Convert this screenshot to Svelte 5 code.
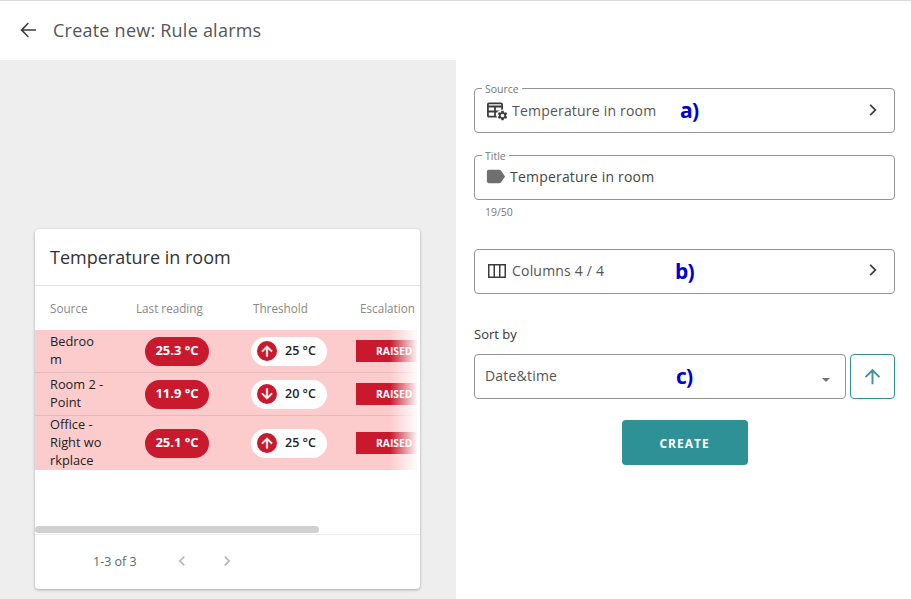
<script>
  const rows = [
    { source: 'Bedroo\nm', reading: '25.3 °C', dir: 'up', limit: '25 °C', size: 'mid' },
    { source: 'Room 2 -\nPoint', reading: '11.9 °C', dir: 'down', limit: '20 °C', size: 'mid' },
    { source: 'Office -\nRight wo\nrkplace', reading: '25.1 °C', dir: 'up', limit: '25 °C', size: 'tall' }
  ];
</script>

<div class="page">
  <header class="top">
    <svg class="back" viewBox="0 0 24 24" width="24" height="24"><path d="M20 11.200H7.500l5.400-5.600-1-1L4.400 12l7.500 7.400 1-1-5.400-5.600H20z" /></svg>
    <h1>Create new: Rule alarms</h1>
  </header>

  <main class="body">
    <section class="preview">
      <article class="card">
        <h2>Temperature in room</h2>
        <div class="table">
          <div class="row head">
            <span>Source</span>
            <span>Last reading</span>
            <span>Threshold</span>
            <span class="nowrap">Escalation</span>
          </div>
          {#each rows as r}
            <div class="row data {r.size}">
              <span class="src">{r.source}</span>
              <span class="reading"><span class="lift">{r.reading}</span></span>
              <span class="limit">
                <span class="dot">
                  <svg viewBox="0 0 24 24" width="16" height="16" class:flip={r.dir === 'down'}><path d="M4 12l1.41 1.41L11 7.83V20h2V7.83l5.58 5.59L20 12l-8-8-8 8z" /></svg>
                </span>
                <span class="lift">{r.limit}</span>
              </span>
              <span class="esc">RAISED</span>
            </div>
          {/each}
          <div class="fade"></div>
        </div>
        <div class="spacer"></div>
        <div class="scroll"><div class="thumb"></div></div>
        <footer class="pager">
          <span class="count">1-3 of 3</span>
          <svg viewBox="0 0 24 24" width="20" height="20"><path d="M15.41 16.59L10.83 12l4.58-4.59L14 6l-6 6 6 6z" /></svg>
          <svg viewBox="0 0 24 24" width="20" height="20"><path d="M8.59 16.59L13.17 12 8.59 7.41 10 6l6 6-6 6z" /></svg>
        </footer>
      </article>
    </section>

    <section class="form">
      <div class="field source">
        <span class="legend">Source</span>
        <svg class="ico" viewBox="0 0 24 24" width="24" height="24">
          <rect class="line" x="2.900" y="4.400" width="14.200" height="13.200" rx="1" />
          <path class="line" d="M2 7.500H18M2 12.500H18M10 7.500V18" />
          <circle class="knock" cx="17.500" cy="16.500" r="6" />
          <path transform="translate(11.500 10.500) scale(.5)" d="M19.14 12.94c.04-.3.06-.61.06-.94 0-.32-.02-.64-.07-.94l2.03-1.58c.18-.14.23-.41.12-.61l-1.92-3.32c-.12-.22-.37-.29-.59-.22l-2.39.96c-.5-.38-1.03-.7-1.62-.94l-.36-2.54c-.04-.24-.24-.41-.48-.41h-3.84c-.24 0-.43.17-.47.41l-.36 2.54c-.59.24-1.13.57-1.62.94l-2.39-.96c-.22-.08-.47 0-.59.22L2.74 8.87c-.12.21-.08.47.12.61l2.03 1.58c-.05.3-.09.63-.09.94s.02.64.07.94l-2.03 1.58c-.18.14-.23.41-.12.61l1.92 3.32c.12.22.37.29.59.22l2.39-.96c.5.38 1.03.7 1.62.94l.36 2.54c.05.24.24.41.48.41h3.84c.24 0 .44-.17.47-.41l.36-2.54c.59-.24 1.13-.56 1.62-.94l2.39.96c.22.08.47 0 .59-.22l1.92-3.32c.12-.22.07-.47-.12-.61l-2.01-1.58zM12 15.600c-1.980 0-3.600-1.620-3.600-3.600s1.620-3.600 3.600-3.600 3.600 1.620 3.600 3.600-1.620 3.600-3.600 3.600z" />
        </svg>
        <span class="val">Temperature in room</span>
        <span class="note a">a)</span>
        <svg class="chev" viewBox="0 0 24 24" width="24" height="24"><path d="M8.590 16.590L13.170 12 8.590 7.410 9.800 6.200 15.600 12l-5.800 5.800z" /></svg>
      </div>

      <div class="field title">
        <span class="legend">Title</span>
        <svg class="tag" viewBox="0 0 24 24" width="23" height="23"><path d="M17.63 5.84C17.27 5.33 16.67 5 16 5L5 5.010C3.900 5.010 3 5.900 3 7v10c0 1.100.9 1.990 2 1.990L16 19c.67 0 1.270-.33 1.630-.84L22 12l-4.370-6.160z" /></svg>
        <span class="val dark">Temperature in room</span>
      </div>
      <div class="counter">19/50</div>

      <div class="field columns">
        <svg class="ico cols" viewBox="0 0 24 24" width="24" height="24"><path fill-rule="evenodd" d="M3 5h18v14H3zM4.500 6.500v11h4v-11zM10 6.500v11h4v-11zM15.500 6.500v11h4v-11z" /></svg>
        <span class="val">Columns 4 / 4</span>
        <span class="note b">b)</span>
        <svg class="chev" viewBox="0 0 24 24" width="24" height="24"><path d="M8.590 16.590L13.170 12 8.590 7.410 9.800 6.200 15.600 12l-5.800 5.800z" /></svg>
      </div>

      <div class="sort-label">Sort by</div>
      <div class="sort">
        <div class="field select">
          <span class="val plain">Date&amp;time</span>
          <span class="note c">c)</span>
          <span class="caret"></span>
        </div>
        <button class="dir" aria-label="Sort direction">
          <svg viewBox="0 0 24 24" width="23" height="23"><path d="M4 12l1.41 1.41L11 7.83V20h2V7.83l5.58 5.59L20 12l-8-8-8 8z" /></svg>
        </button>
      </div>

      <button class="create">CREATE</button>
    </section>
  </main>
</div>

<style>
  :global(body) {
    margin: 0;
    background: #fff;
  }
  .page {
    height: 599px;
    width: 911px;
    display: flex;
    flex-direction: column;
    overflow: hidden;
    font-family: "Open Sans", "Liberation Sans", sans-serif;
    color: #333;
  }
  .top {
    height: 57px;
    border-top: 1px solid #ddd;
    display: flex;
    align-items: center;
    padding: 0 0 2px 16px;
    flex: none;
  }
  .back {
    fill: #3c3c3c;
  }
  h1 {
    margin: 0 0 0 13px;
    font-size: 18px;
    font-weight: 400;
    letter-spacing: 0.23px;
    color: #555;
  }
  .body {
    flex: 1;
    display: flex;
    min-height: 0;
  }
  .preview {
    width: 456px;
    background: #eee;
    display: flex;
    flex-direction: column;
    justify-content: flex-end;
    padding: 0 36px 10px 35px;
    box-sizing: border-box;
  }
  .card {
    height: 360px;
    background: #fff;
    border-radius: 4px;
    box-shadow: 0 1px 3px rgba(0, 0, 0, 0.3);
    display: flex;
    flex-direction: column;
    overflow: hidden;
  }
  h2 {
    margin: 0;
    height: 57px;
    box-sizing: border-box;
    padding: 14px 0 0 15px;
    font-size: 18px;
    line-height: 28px;
    font-weight: 400;
    color: #333;
    border-bottom: 1px solid #e4e4e4;
    flex: none;
  }
  .table {
    position: relative;
    width: 383px;
    overflow: hidden;
    flex: none;
  }
  .row {
    display: grid;
    grid-template-columns: 86px 117px 107px 120px;
    padding-left: 15px;
    align-items: center;
    font-size: 12.800px;
  }
  .head {
    height: 44px;
    box-sizing: border-box;
    color: #888;
    font-size: 11.700px;
  }
  .nowrap {
    white-space: nowrap;
  }
  .data {
    background: #fccccc;
    color: #222;
    border-bottom: 1px solid #e5b9b9;
  }
  .mid {
    height: 42px;
  }
  .tall {
    height: 54px;
    border-bottom: 0;
  }
  .src {
    line-height: 18px;
    white-space: pre-line;
    margin-top: -2px;
  }
  .lift {
    margin-top: -2px;
  }
  .reading {
    margin-left: 9px;
    width: 64px;
    height: 29px;
    border-radius: 15px;
    background: #c8192d;
    color: #fff;
    font-weight: 700;
    font-size: 13px;
    display: flex;
    align-items: center;
    justify-content: center;
  }
  .limit {
    margin-left: -2px;
    width: 76px;
    height: 29px;
    box-sizing: border-box;
    padding-left: 6px;
    border-radius: 15px;
    background: #fff;
    color: #222;
    font-weight: 600;
    font-size: 12.500px;
    display: flex;
    align-items: center;
    gap: 8px;
  }
  .dot {
    width: 20px;
    height: 20px;
    border-radius: 50%;
    background: #c8192d;
    display: flex;
    align-items: center;
    justify-content: center;
  }
  .dot svg {
    fill: #fff;
    stroke: #fff;
    stroke-width: 1;
  }
  .flip {
    transform: rotate(180deg);
  }
  .esc {
    margin-left: -4px;
    width: 100px;
    height: 22px;
    box-sizing: border-box;
    padding-left: 20px;
    background: #c8192d;
    color: #fff;
    font-size: 10.300px;
    font-weight: 700;
    line-height: 22px;
  }
  .fade {
    position: absolute;
    top: 44px;
    right: 0;
    bottom: 0;
    width: 28px;
    background: linear-gradient(to right, rgba(255, 255, 255, 0), #fff);
  }
  .spacer {
    flex: 1;
  }
  .scroll {
    height: 8px;
    border-bottom: 1px solid #eee;
    flex: none;
  }
  .thumb {
    width: 284px;
    height: 7px;
    border-radius: 4px;
    background: #d0d0d0;
  }
  .pager {
    height: 54px;
    display: flex;
    align-items: center;
    padding: 0 0 2px 58px;
    box-sizing: border-box;
    flex: none;
  }
  .pager svg {
    fill: #b8b8b8;
    margin-left: 35px;
  }
  .pager svg:last-child {
    margin-left: 25px;
  }
  .count {
    font-size: 12.500px;
    color: #666;
  }
  .form {
    flex: 1;
    padding: 28px 16px 0 18px;
    display: flex;
    flex-direction: column;
  }
  .field {
    position: relative;
    height: 45px;
    box-sizing: border-box;
    border: 1px solid #949494;
    border-radius: 4px;
    display: flex;
    align-items: center;
    padding: 0 0 2px 10px;
    font-size: 14px;
    flex: none;
  }
  .source {
    padding-bottom: 0;
  }
  .legend {
    position: absolute;
    left: 7px;
    top: -7px;
    padding: 0 3px;
    background: #fff;
    font-size: 10.500px;
    line-height: 14px;
    color: #777;
  }
  .ico {
    fill: #3c3c3c;
    flex: none;
  }
  .line {
    fill: none;
    stroke: #3c3c3c;
    stroke-width: 1.800;
  }
  .knock {
    fill: #fff;
  }
  .tag {
    fill: #6f6f6f;
    flex: none;
    margin-left: -1px;
  }
  .val {
    margin-left: 3px;
    letter-spacing: 0.2px;
    color: #555;
  }
  .dark {
    color: #444;
  }
  .plain {
    margin-left: 0;
  }
  .note {
    position: absolute;
    top: 6px;
    color: #0000cc;
    font-size: 21px;
    line-height: 30px;
    font-weight: 700;
    letter-spacing: -0.7px;
  }
  .a {
    left: 205px;
  }
  .b {
    left: 200px;
  }
  .c {
    left: 201px;
  }
  .chev {
    position: absolute;
    right: 9px;
    top: 9px;
    fill: #3c3c3c;
  }
  .columns .chev {
    top: 8px;
  }
  .title {
    margin-top: 22px;
  }
  .counter {
    margin: 5px 0 0 11px;
    font-size: 10.500px;
    line-height: 14px;
    color: #777;
  }
  .columns {
    margin-top: 30px;
  }
  .sort-label {
    margin-top: 31px;
    font-size: 13px;
    line-height: 18px;
    color: #333;
  }
  .sort {
    margin-top: 11px;
    display: flex;
    gap: 4px;
  }
  .select {
    flex: 1;
  }
  .caret {
    position: absolute;
    right: 15px;
    top: 23px;
    border-left: 4.500px solid transparent;
    border-right: 4.500px solid transparent;
    border-top: 4.500px solid #757575;
  }
  .dir {
    width: 45px;
    height: 45px;
    padding: 0;
    background: #fff;
    border: 1px solid #2e9196;
    border-radius: 4px;
    display: flex;
    align-items: center;
    justify-content: center;
  }
  .dir svg {
    fill: #3f929c;
  }
  .create {
    align-self: center;
    margin: 21px 0 0 0;
    width: 126px;
    height: 45px;
    padding: 1px 0 0;
    border: 0;
    border-radius: 4px;
    background: #2e9196;
    color: #fff;
    font-family: inherit;
    font-size: 12px;
    font-weight: 700;
    letter-spacing: 1px;
  }
</style>
